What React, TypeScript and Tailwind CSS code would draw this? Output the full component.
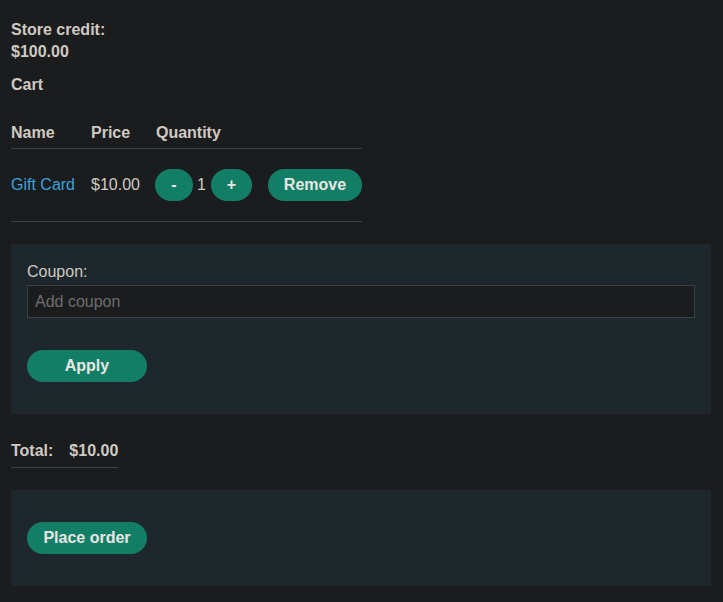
import { useState } from 'react'

// Panier — page sombre, style lab
export default function App() {
  const [qty, setQty] = useState(1)
  const [coupon, setCoupon] = useState('')

  const btn = 'h-8 rounded-full bg-[#137e66] text-[#e8e6e3] font-bold px-4 leading-none'

  return (
    <div className="min-h-[602px] bg-[#1b1c1e] text-[#cfcac2] text-[16px] leading-[22px] pl-[11px] pr-[12px] pt-[19px] pb-4"
      style={{ fontFamily: '"Liberation Sans", Arial, sans-serif' }}>
      <p className="font-bold">Store credit:</p>
      <p className="font-bold">$100.00</p>
      <p className="font-bold mt-[11px]">Cart</p>

      {/* Tableau du panier */}
      <table className="mt-[26px] border-collapse">
        <thead>
          <tr className="border-b border-[#3d4144]">
            <th className="text-left font-bold pr-4 pb-[4px]">Name</th>
            <th className="text-left font-bold pr-4 pb-[4px]">Price</th>
            <th className="text-left font-bold pr-4 pb-[4px]">Quantity</th>
            <th />
          </tr>
        </thead>
        <tbody>
          <tr className="border-b border-[#3d4144]">
            <td className="pr-4 py-5"><a href="#" className="text-[#3aa3dc]">Gift Card</a></td>
            <td className="pr-4 py-5">$10.00</td>
            <td className="pr-4 py-5">
              <div className="flex items-center -ml-[1px]">
                <button className={`${btn} w-[38px] px-0`} onClick={() => setQty(q => Math.max(0, q - 1))}>-</button>
                <span className="ml-[4px] mr-[5px]">{qty}</span>
                <button className={`${btn} w-[41px] px-0`} onClick={() => setQty(q => q + 1)}>+</button>
              </div>
            </td>
            <td className="py-5">
              <button className={`${btn} w-[94px] px-0`}>Remove</button>
            </td>
          </tr>
        </tbody>
      </table>

      {/* Coupon */}
      <div className="mt-[22px] bg-[#1d272c] px-4 pt-[17px] pb-8">
        <label className="block">Coupon:</label>
        <input
          value={coupon}
          onChange={e => setCoupon(e.target.value)}
          placeholder="Add coupon"
          className="mt-[2px] block w-full h-[33px] bg-[#1b1c1e] border border-[#3a4145] px-[7px] text-[#cfcac2] placeholder:text-[#6e6e6e] outline-none"
        />
        <button className={`${btn} mt-8 w-[120px]`}>Apply</button>
      </div>

      {/* Total */}
      <table className="mt-[26px] border-collapse">
        <tbody>
          <tr className="border-b border-[#3d4144]">
            <th className="text-left font-bold pr-4 pb-[5px]">Total:</th>
            <th className="text-left font-bold pb-[5px]">$10.00</th>
          </tr>
        </tbody>
      </table>

      <div className="mt-[22px] bg-[#1d272c] px-4 py-8">
        <button className={`${btn} w-[120px]`}>Place order</button>
      </div>
    </div>
  )
}
